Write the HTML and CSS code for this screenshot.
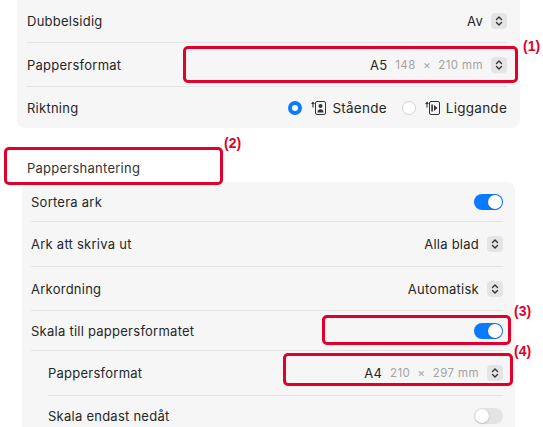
FILE: index.html
```html
<!DOCTYPE html>
<html lang="sv">
<head>
    <meta charset="UTF-8">
    <title>Utskriftsinställningar</title>
    <link rel="stylesheet" href="styles.css">
</head>
<body>
    <div class="page">
        <div class="panel panel-top">
            <div class="row row-first">
                <span class="label">Dubbelsidig</span>
                <span class="popup">
                    <span class="value">Av</span>
                    <span class="stepper">
                        <svg width="16" height="16" viewBox="0 0 16 16"><path d="M5.5 6.5 8 4l2.5 2.5M5.5 9.5 8 12l2.5-2.5" fill="none" stroke="#333" stroke-width="1.4" stroke-linecap="round" stroke-linejoin="round"/></svg>
                    </span>
                </span>
            </div>
            <div class="row row-mid">
                <span class="label">Pappersformat</span>
                <span class="popup">
                    <span class="value">A5</span>
                    <span class="size">148 &nbsp;×&nbsp; 210 mm</span>
                    <span class="stepper">
                        <svg width="16" height="16" viewBox="0 0 16 16"><path d="M5.5 6.5 8 4l2.5 2.5M5.5 9.5 8 12l2.5-2.5" fill="none" stroke="#333" stroke-width="1.4" stroke-linecap="round" stroke-linejoin="round"/></svg>
                    </span>
                </span>
            </div>
            <div class="row row-last">
                <span class="label">Riktning</span>
                <span class="radios">
                    <span class="radio radio-on"></span>
                    <svg class="orient" width="15" height="14" viewBox="0 0 15 14">
                        <path d="M2 6.5V1.5M0.6 3 2 1.3 3.4 3" fill="none" stroke="#333" stroke-width="1.1"/>
                        <rect x="4.5" y="0.5" width="10" height="13" rx="1.5" fill="none" stroke="#333" stroke-width="1"/>
                        <circle cx="9.5" cy="5" r="2" fill="#333"/>
                        <path d="M6.5 11.5c0-2.2 1.3-3.2 3-3.2s3 1 3 3.2z" fill="#333"/>
                    </svg>
                    <span class="opt">Stående</span>
                    <span class="radio"></span>
                    <svg class="orient" width="15" height="14" viewBox="0 0 15 14">
                        <path d="M2 6.5V1.5M0.6 3 2 1.3 3.4 3" fill="none" stroke="#333" stroke-width="1.1"/>
                        <rect x="4.5" y="0.5" width="10" height="13" rx="1.5" fill="none" stroke="#333" stroke-width="1"/>
                        <rect x="6.3" y="3.5" width="1.6" height="7" fill="#333"/>
                        <path d="M9 4v6l3.5-3z" fill="#333"/>
                    </svg>
                    <span class="opt">Liggande</span>
                </span>
            </div>
        </div>

        <div class="section-title">Pappershantering</div>

        <div class="panel panel-bottom">
            <div class="row row-toggle">
                <span class="label">Sortera ark</span>
                <span class="toggle toggle-on"></span>
            </div>
            <div class="row row-popup">
                <span class="label">Ark att skriva ut</span>
                <span class="popup">
                    <span class="value">Alla blad</span>
                    <span class="stepper">
                        <svg width="16" height="16" viewBox="0 0 16 16"><path d="M5.5 6.5 8 4l2.5 2.5M5.5 9.5 8 12l2.5-2.5" fill="none" stroke="#333" stroke-width="1.4" stroke-linecap="round" stroke-linejoin="round"/></svg>
                    </span>
                </span>
            </div>
            <div class="row row-popup">
                <span class="label">Arkordning</span>
                <span class="popup">
                    <span class="value">Automatisk</span>
                    <span class="stepper">
                        <svg width="16" height="16" viewBox="0 0 16 16"><path d="M5.5 6.5 8 4l2.5 2.5M5.5 9.5 8 12l2.5-2.5" fill="none" stroke="#333" stroke-width="1.4" stroke-linecap="round" stroke-linejoin="round"/></svg>
                    </span>
                </span>
            </div>
            <div class="row row-toggle">
                <span class="label">Skala till pappersformatet</span>
                <span class="toggle toggle-on"></span>
            </div>
            <div class="row row-popup row-indent">
                <span class="label">Pappersformat</span>
                <span class="popup">
                    <span class="value">A4</span>
                    <span class="size">210 &nbsp;×&nbsp; 297 mm</span>
                    <span class="stepper">
                        <svg width="16" height="16" viewBox="0 0 16 16"><path d="M5.5 6.5 8 4l2.5 2.5M5.5 9.5 8 12l2.5-2.5" fill="none" stroke="#333" stroke-width="1.4" stroke-linecap="round" stroke-linejoin="round"/></svg>
                    </span>
                </span>
            </div>
            <div class="row row-toggle row-indent">
                <span class="label">Skala endast nedåt</span>
                <span class="toggle"></span>
            </div>
        </div>

        <!-- annotations -->
        <div class="mark mark-1"></div>
        <div class="mark-label label-1">(1)</div>
        <div class="mark mark-2"></div>
        <div class="mark-label label-2">(2)</div>
        <div class="mark mark-3"></div>
        <div class="mark-label label-3">(3)</div>
        <div class="mark mark-4"></div>
        <div class="mark-label label-4">(4)</div>
    </div>
</body>
</html>
```

FILE: styles.css
```css
:root {
    --panel-bg: #f6f6f6;
    --divider: #e3e3e3;
    --text: #262626;
    --muted: #a3a3a3;
    --blue: #0a7aff;
    --mark: #e0002b;
}

* {
    box-sizing: border-box;
    margin: 0;
    padding: 0;
}

body {
    font-family: Inter, 'Noto Sans', sans-serif;
    font-size: 13px;
    letter-spacing: 0.25px;
    color: var(--text);
    background: #fff;
    height: 427px;
    overflow: hidden;
}

.page {
    position: relative;
    width: 543px;
}

.panel {
    background: var(--panel-bg);
    display: flex;
    flex-direction: column;
}

.panel-top {
    margin-left: 17px;
    width: 503px;
    padding: 0 13px 0 10px;
    border-radius: 0 0 8px 8px;
}

.panel-bottom {
    margin-left: 22px;
    width: 493px;
    padding: 0 12px 0 9px;
    border-radius: 8px 8px 0 0;
}

.row {
    display: flex;
    align-items: center;
    justify-content: space-between;
    border-bottom: 1px solid var(--divider);
}

.row:last-child {
    border-bottom: none;
}

.row-first { height: 43px; }
.row-mid { height: 44px; }
.row-last { height: 41px; }

.panel-bottom .row-toggle { height: 40px; }
.panel-bottom .row-popup { height: 45px; }
.panel-bottom .row:nth-child(3) { height: 44px; }
.panel-bottom .row:nth-child(4) { height: 40px; }
.panel-bottom .row:last-child { height: 40px; }

.row-indent {
    margin-left: 17px;
}

.popup {
    display: flex;
    align-items: center;
}

.value {
    color: var(--text);
}

.size {
    color: var(--muted);
    font-size: 11.5px;
    letter-spacing: 0.4px;
    margin-left: 8px;
}

.stepper {
    display: flex;
    width: 16px;
    height: 16px;
    margin-left: 8px;
    border-radius: 4px;
    background: #e4e4e4;
}

.radios {
    display: flex;
    align-items: center;
}

.radio {
    width: 14px;
    height: 14px;
    border-radius: 50%;
    background: #fff;
    border: 1px solid #d4d4d4;
}

.radio-on {
    background: #fff;
    border: 4px solid var(--blue);
}

.orient {
    margin-left: 9px;
}

.opt {
    margin-left: 6px;
    margin-right: 15px;
    font-size: 13.5px;
}

.opt:last-child {
    margin-right: 0;
}

.section-title {
    height: 54px;
    padding: 32px 0 0 27px;
    color: #333;
}

.toggle {
    position: relative;
    width: 29px;
    height: 16px;
    border-radius: 8px;
    background: #e3e3e3;
}

.toggle::after {
    content: "";
    position: absolute;
    top: 1px;
    left: 1px;
    width: 14px;
    height: 14px;
    border-radius: 50%;
    background: #fff;
    box-shadow: 0 0.5px 1.5px rgba(0, 0, 0, 0.3);
}

.toggle-on {
    background: var(--blue);
}

.toggle-on::after {
    left: 14px;
}

.mark {
    position: absolute;
    border: 3px solid var(--mark);
    border-radius: 5px;
}

.mark-1 { left: 183px; top: 46px; width: 335px; height: 37px; }
.mark-2 { left: 4px; top: 147px; width: 219px; height: 38px; }
.mark-3 { left: 322px; top: 315px; width: 189px; height: 30px; }
.mark-4 { left: 283px; top: 353px; width: 230px; height: 33px; }

.mark-label {
    position: absolute;
    font-family: 'Liberation Sans', Arial, sans-serif;
    font-weight: 700;
    font-size: 14px;
    letter-spacing: 0;
    color: var(--mark);
}

.label-1 { left: 523px; top: 38px; }
.label-2 { left: 224px; top: 135px; }
.label-3 { left: 514px; top: 303px; }
.label-4 { left: 514px; top: 343px; }
```
